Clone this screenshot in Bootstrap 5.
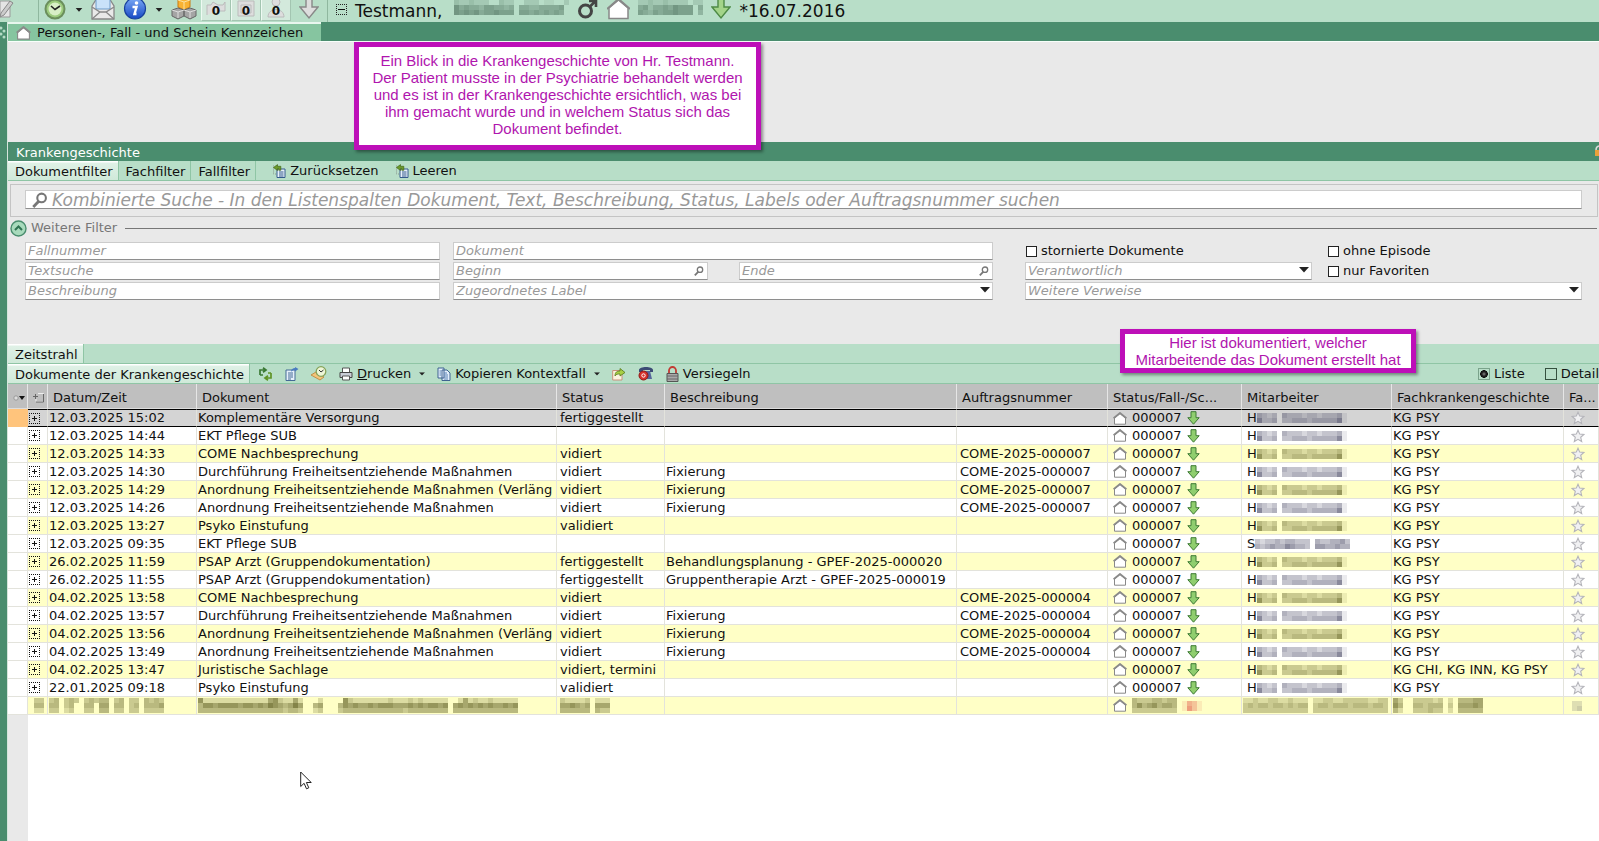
<!DOCTYPE html>
<html lang="de">
<head>
<meta charset="utf-8">
<meta name="viewport" content="width=device-width, initial-scale=1">
<title>Krankengeschichte – Testmann</title>
<link rel="stylesheet" href="https://cdn.jsdelivr.net/npm/bootstrap@5.3.0/dist/css/bootstrap.min.css">
<style>
:root{--dark:#4a8d6e;--mint:#b8dec8;--line:#8fc5a5;--panel:#e9e9e9;--note:#bd0fb8}
body{font:13px/18px "DejaVu Sans",Verdana,sans-serif;color:#111;background:#fff;min-height:100vh;overflow:hidden}
button{font:inherit;color:inherit;background:none;border:0;padding:0;white-space:nowrap}
svg{flex:none;display:block}
.topbar{height:22px;background:var(--mint);font-size:17px;line-height:22px}
.topbar svg,.topbar button{flex:none}
.topbar .vline{width:1px;height:22px;background:#8fb79f}
.countbtn{width:30px;height:21px;position:relative;background:#d3e9dc;border:1px solid #a3c5b1;border-top:0;border-left-color:#eefaf2;font:bold 12px/22px "DejaVu Sans",sans-serif;text-align:center}
.countbtn svg{position:absolute;left:4px;top:0}
.countbtn span{position:relative}
.rail{width:8px;background:var(--dark);border-right:1px solid #d5e5dc}
.darkbar{background:var(--dark)}
.darkbar.titled{height:19px;line-height:21px}
.signtab{background:#86c5a0;border-top:2px solid #e8f6ee;height:19px;line-height:17px;width:313px;gap:6px}
.signpanel{height:101px;background:var(--panel);border-top:1px solid #f8fffb}
.tabstrip{height:20px;background:var(--mint);border-bottom:1px solid var(--line);line-height:19px}
.tabstrip>.tab{height:19px;line-height:21px;padding:0 5px 0 7px;border-right:1px solid var(--line)}
.tabstrip>.tab.on{background:linear-gradient(#fff 0 1px,#dff1e6 2px,#cfe9d9)}
.filters{background:var(--panel);height:163px;padding-top:3px}
.searchbox{margin:0 1px 0 2px;border:1px solid #c4c4c4;height:33px;padding:5px 15px 0 14px}
.field{position:relative;height:18px;background:#fff;border:1px solid #ccc;border-bottom-color:#8e8e8e}
.field input,.field select{width:100%;height:16px;border:0;outline:0;background:none;padding:0 2px;font:italic 13px/16px "DejaVu Sans",sans-serif;color:#999;display:block;appearance:none}
.field input::placeholder{color:#999;opacity:1}
.field>svg{position:absolute;right:2px;top:3px;pointer-events:none}
.bigfield{height:19px;display:flex;align-items:center}
.bigfield input{font-size:17px;line-height:20px;height:20px;padding-left:26px;flex:none}
.bigfield>svg{left:6px;right:auto;top:1px}
.more{color:#777;height:22px;padding:0 2px}
.more hr{margin:0;border-color:#777;opacity:1}
.fgrid{display:grid;grid-template-columns:415fr 13px 255fr 31px 254fr 32px 287fr 15px 255fr;row-gap:2px;margin:3px 17px 0 17px}
.c1{grid-column:1}.c35{grid-column:3/6}.c3{grid-column:3}.c5{grid-column:5}.c7{grid-column:7}.c79{grid-column:7/10}.c9{grid-column:9}
.tick{display:flex;align-items:center;gap:4px;padding-left:1px;color:#111}
.tick input,.viewopt input{appearance:none;margin:0;width:11px;height:11px;border:1px solid #222;background:#fff}
.viewopt{display:flex;align-items:center;gap:4px}
.viewopt input{width:12px;height:12px;background:transparent;border-color:#35503f}
.viewopt input:checked{background:radial-gradient(circle at 50% 50%,#888 0,#222 30%,#111 50%,transparent 58%);border-color:#7aa38b}
.records{table-layout:fixed;width:100%;border-collapse:separate;border-spacing:0}
.records th{height:25px;line-height:18px;background:#bfbfbf;font-weight:400;padding:3px 0 0 5px;border-right:1px solid #e6e6e6;border-bottom:1px solid #ddd;white-space:nowrap;overflow:hidden}
.records td{height:18px;line-height:17px;padding:0 0 0 1px;border-right:1px solid #e3e3dc;border-bottom:1px solid #e3e3dc;white-space:nowrap;overflow:hidden;color:#111}
.records td.in{padding-left:3px}
.records tr.alt td{background:#ffffc6}
.records tr td.gut{background:#fff}
.records tr.sel td{background:#d4d4d4;border-top:1px solid #000;border-bottom:1px solid #000;line-height:16px}
.records tr.sel td.gut{background:#ffc47c;border-color:#ffc47c}
.records td .d-flex{height:16px}
.casecell{gap:5px}
.belowgut{width:20px;background:var(--panel)}
.note{position:absolute;background:#fff;border:5px solid var(--note);box-shadow:2px 2px 3px #0006;color:#b015ae;font:15px/17px "Liberation Sans",Arial,sans-serif;text-align:center}
.note1{left:354px;top:42px;width:407px;height:108px;padding-top:5px}
.note2{left:1120px;top:329px;width:296px;height:44px}
.pointer{position:absolute;left:300px;top:771px}
.cornerlock{position:absolute;right:0;top:145px}
</style>
</head>
<body class="d-flex flex-column">
<svg width="0" height="0" class="position-absolute">
<defs>
<linearGradient id="gb" x1="0" y1="0" x2="0" y2="1"><stop offset="0" stop-color="#7aa9f5"/><stop offset="1" stop-color="#1648c4"/></linearGradient>
<symbol id="house" viewBox="0 0 14 13"><path d="M1.500 6v6.200h11V6L7 1.500z" fill="#fff" stroke="#888"/><path d="M.6 6.300 7 1l6.400 5.300" fill="none" stroke="#8a8a8a" stroke-width="1.800"/></symbol>
<symbol id="down" viewBox="0 0 13 14"><path d="M4 .7h5v6h3.200L6.500 13.200.8 6.700H4z" fill="#8fce6e" stroke="#3e7a35"/></symbol>
<symbol id="star" viewBox="0 0 14 14"><path d="m7 1.200 1.700 3.900 4.200.4-3.200 2.800 1 4.200L7 10.300l-3.700 2.200 1-4.200L1.100 5.500l4.200-.4z" fill="#f1f1f3" stroke="#b4b4ba" stroke-width="1.100"/></symbol>
<symbol id="plus" viewBox="0 0 11 11"><path d="M0 .5h11M0 10.500h11M.5 0v11M10.500 0v11" fill="none" stroke="#111" stroke-dasharray="1 1" shape-rendering="crispEdges"/><path d="M3 5.500h5M5.500 3v5" stroke="#111"/></symbol>
<symbol id="lens" viewBox="0 0 10 10"><circle cx="6" cy="3.700" r="2.700" fill="none" stroke="#777" stroke-width="1.300"/><path d="M4.200 5.800.8 9.300" stroke="#777" stroke-width="1.800"/></symbol>
<symbol id="caret" viewBox="0 0 10 6"><path d="M0 0h10L5 5.500z" fill="#222"/></symbol>
<symbol id="reset" viewBox="0 0 14 14"><path d="M5 5h8v8.500H5z" fill="#e8f1fb" stroke="#345a8c"/><path d="M7 8h4.500M7 10h4.500M7 12h4.500" stroke="#345a8c"/><path d="M1.500 1.500v8.500h3" fill="none" stroke="#8a9a90" stroke-dasharray="1 1"/><path d="M1.500 3.500 5.500.6v1.700h3.300v4H6.800V4.700H5.500v1.800z" fill="#6c9a2c" stroke="#44681a" stroke-width=".7"/></symbol>
</defs>
</svg>

<header class="topbar d-flex align-items-start overflow-hidden">
 <svg width="14" height="20" viewBox="0 0 14 20"><path d="M0 1h10v16H0z" fill="#e4e4e4" stroke="#999"/><path d="m1 13 9-12 3 2-9 12-4 2z" fill="#ccc" stroke="#888"/></svg>
 <span class="vline ms-4"></span>
 <button class="ms-1" aria-label="Verlauf"><svg width="24" height="21" viewBox="0 0 24 21"><circle cx="12" cy="9" r="9.500" fill="#9ccb7d" stroke="#6b8f5c" stroke-width="2"/><circle cx="12" cy="9" r="6.500" fill="#d8efc6"/><path d="m8 6 4 3.500L17 6" fill="none" stroke="#222" stroke-width="1.600"/></svg></button>
 <svg class="ms-2 mt-2" width="8" height="4"><use href="#caret"/></svg>
 <button class="ms-2" aria-label="Nachricht"><svg width="24" height="21" viewBox="0 0 24 21"><path d="M1 6 6-2h12l5 8v13H1z" fill="#e9e9e9" stroke="#888" stroke-width="1.300"/><path d="M5-1h14v10H5z" fill="#c9e2fa" stroke="#6d9bc8"/><path d="m1 7 8 5h6l8-5M1 19l8-7M23 19l-8-7" fill="none" stroke="#888" stroke-width="1.300"/></svg></button>
 <button class="ms-2" aria-label="Info"><svg width="24" height="21" viewBox="0 0 24 21"><circle cx="12" cy="8.500" r="10.500" fill="url(#gb)" stroke="#17409c" stroke-width="1.200"/><circle cx="13.500" cy="3" r="1.800" fill="#fff"/><path d="M9.500 7h4l-2 7h2" fill="none" stroke="#fff" stroke-width="2.400"/></svg></button>
 <svg class="ms-2 mt-2" width="8" height="4"><use href="#caret"/></svg>
 <button class="ms-2" aria-label="Module"><svg width="26" height="21" viewBox="0 0 26 21"><path d="m13-3 6 2v8l-6 3-6-3v-8z" fill="#f9b233" stroke="#c97a10"/><path d="M7 0 13 2l6-2M13 2v7" stroke="#fce1a0" fill="none"/><path d="m7 8 6 2v6l-6 3-6-3v-6zM19 8l6 2v6l-6 3-6-3v-6z" fill="#a5a5a5" stroke="#666"/><path d="m1 10 6 2 6-2 6 2 6-2M7 12v6M19 12v6" fill="none" stroke="#ddd"/></svg></button>
 <div class="d-flex ms-1">
  <button class="countbtn"><svg width="22" height="19" viewBox="0 0 22 19"><path d="M1 15V5h4l2-3 5 3h5l2-3v9h-7" fill="#ddd" stroke="#bbb"/></svg><span>0</span></button>
  <button class="countbtn"><svg width="22" height="19" viewBox="0 0 22 19"><path d="M2 1h16v15H2z" fill="#ddd" stroke="#bbb"/><path d="M5 5h10v8H5z" fill="none" stroke="#bbb"/></svg><span>0</span></button>
  <button class="countbtn"><svg width="22" height="19" viewBox="0 0 22 19"><circle cx="10" cy="2" r="4" fill="#ddd" stroke="#bbb"/><path d="M2 17c0-10 16-10 16 0z" fill="#ddd" stroke="#bbb"/></svg><span>0</span></button>
 </div>
 <svg class="ms-2" width="20" height="20" viewBox="0 0 20 20"><path d="M7-2h6v9h6l-9 11L1 7h6z" fill="#ddd" stroke="#888" stroke-width="1.400"/></svg>
 <span class="vline ms-2"></span>
 <svg class="ms-2 mt-1" width="11" height="11" viewBox="0 0 11 11"><path d="M0 .5h11M0 10.500h11M.5 0v11M10.500 0v11" fill="none" stroke="#222" stroke-dasharray="1 1" shape-rendering="crispEdges"/><path d="M2 5.500h7" stroke="#111"/></svg>
 <span class="ms-2">Testmann,</span>
 <span class="ms-2 ps-1 mosaic" data-p="32232220032200222011002|75655466554505544555560|76767566766606656565650" data-c="84,120,100"></span>
 <svg class="ms-2" width="22" height="20" viewBox="0 0 22 20"><circle cx="8.500" cy="11" r="6" fill="none" stroke="#444" stroke-width="3"/><path d="m12.500 7 6-6M12 1h7v6" fill="none" stroke="#444" stroke-width="2.600"/></svg>
 <svg class="ms-2" width="23" height="20" viewBox="0 0 23 20"><path d="M2 8v10.500h19V8L11.500 0z" fill="#fff" stroke="#888" stroke-width="1.500"/><path d="M0 9 11.500-1 23 9" fill="none" stroke="#888" stroke-width="2"/></svg>
 <span class="ms-2 mosaic" data-p="2232232222022|5635565766605|6546566766604" data-c="84,120,100"></span>
 <svg class="ms-2" width="20" height="20" viewBox="0 0 20 20"><path d="M7-2h6v9h6l-9 11L1 7h6z" fill="#a3d489" stroke="#4d8a45" stroke-width="1.400"/></svg>
 <span class="ms-2">*16.07.2016</span>
</header>

<div class="d-flex flex-grow-1">
 <div class="rail flex-shrink-0"><svg width="6" height="18" viewBox="0 0 6 18"><g fill="#b5dcc6"><circle cx="1" cy="6" r="1.500"/><circle cx="4" cy="9" r="1.500"/><circle cx="1" cy="12" r="1.500"/><circle cx="4" cy="15" r="1.500"/></g></svg></div>
 <main class="flex-grow-1 d-flex flex-column" style="min-width:0">
  <div class="darkbar"><div class="signtab d-flex align-items-center"><svg class="ms-2" width="15" height="14"><use href="#house"/></svg><span>Personen-, Fall - und Schein Kennzeichen</span></div></div>
  <div class="signpanel"></div>
  <div class="darkbar titled text-white ps-2"><span>Krankengeschichte</span></div>
  <nav class="tabstrip d-flex">
   <button class="tab on">Dokumentfilter</button><button class="tab">Fachfilter</button><button class="tab">Fallfilter</button>
   <button class="d-flex align-items-center ms-3"><svg class="me-1" width="14" height="14"><use href="#reset"/></svg>Zurücksetzen</button>
   <button class="d-flex align-items-center ms-3"><svg class="me-1" width="14" height="14"><use href="#reset"/></svg>Leeren</button>
  </nav>
  <section class="filters">
   <div class="searchbox"><div class="field bigfield"><svg width="16" height="16" viewBox="0 0 10 10"><use href="#lens"/></svg><input type="text" aria-label="Kombinierte Suche" placeholder="Kombinierte Suche - In den Listenspalten Dokument, Text, Beschreibung, Status, Labels oder Auftragsnummer suchen"></div></div>
   <div class="more d-flex align-items-center"><button aria-label="Weitere Filter einklappen"><svg width="17" height="17" viewBox="0 0 17 17"><circle cx="8.500" cy="8.500" r="7.500" fill="#a8dabc" stroke="#4a8d6e" stroke-width="1.400"/><path d="m5 10 3.500-3.500L12 10" fill="none" stroke="#2f7352" stroke-width="2"/></svg></button><span class="ms-1">Weitere Filter</span><hr class="flex-grow-1 ms-2"></div>
   <div class="fgrid">
    <div class="field c1"><input aria-label="Fallnummer" placeholder="Fallnummer"></div>
    <div class="field c35"><input aria-label="Dokument" placeholder="Dokument"></div>
    <label class="tick c7"><input type="checkbox">stornierte Dokumente</label>
    <label class="tick c9"><input type="checkbox">ohne Episode</label>
    <div class="field c1"><input aria-label="Textsuche" placeholder="Textsuche"></div>
    <div class="field c3"><input aria-label="Beginn" placeholder="Beginn"><svg width="12" height="10"><use href="#lens"/></svg></div>
    <div class="field c5"><input aria-label="Ende" placeholder="Ende"><svg width="12" height="10"><use href="#lens"/></svg></div>
    <div class="field c7"><select aria-label="Verantwortlich"><option>Verantwortlich</option></select><svg width="10" height="8" viewBox="0 0 10 6"><use href="#caret"/></svg></div>
    <label class="tick c9"><input type="checkbox">nur Favoriten</label>
    <div class="field c1"><input aria-label="Beschreibung" placeholder="Beschreibung"></div>
    <div class="field c35"><select aria-label="Zugeordnetes Label"><option>Zugeordnetes Label</option></select><svg width="10" height="8" viewBox="0 0 10 6"><use href="#caret"/></svg></div>
    <div class="field c79"><select aria-label="Weitere Verweise"><option>Weitere Verweise</option></select><svg width="10" height="8" viewBox="0 0 10 6"><use href="#caret"/></svg></div>
   </div>
  </section>
  <nav class="tabstrip d-flex"><button class="tab on">Zeitstrahl</button></nav>
  <nav class="tabstrip d-flex align-items-center">
   <button class="tab on">Dokumente der Krankengeschichte</button>
   <button class="ms-2" aria-label="Aktualisieren"><svg width="15" height="14" viewBox="0 0 15 14"><path d="M2 8V3h5M5 .8 8 3 5 5.200M2 8h3" fill="none" stroke="#3b7a35" stroke-width="1.700"/><path d="M13 6v5H8M10 13.200 7 11l3-2.200M13 6h-3" fill="none" stroke="#5f9427" stroke-width="1.700"/></svg></button>
   <button class="ms-2 ps-1" aria-label="Öffnen"><svg width="14" height="14" viewBox="0 0 14 14"><path d="M1 3h9v10.500H1z" fill="#e6f0fa" stroke="#456a96"/><path d="M3 6h5M3 8h5M3 10h5M3 12h3" stroke="#456a96"/><path d="M6 5c0-3 2-4 4-4V0l3.500 2L10 4.500V3C8.500 3 7 3.500 6 5z" fill="#4a7cc0"/></svg></button>
   <button class="ms-2 ps-1" aria-label="Verlauf"><svg width="16" height="15" viewBox="0 0 16 15"><path d="m0 9 5-3 8 5-4 3z" fill="#f4c47a" stroke="#b98235" stroke-width=".8"/><circle cx="10" cy="5.500" r="4.800" fill="#eef6d8" stroke="#86a35a" stroke-width="1.300"/><path d="m8 4 2 2 2.500-2" fill="none" stroke="#333"/></svg></button>
   <button class="d-flex align-items-center ms-2 ps-1"><svg class="me-1" width="14" height="14" viewBox="0 0 14 14"><path d="M3.500 1h7v5h-7z" fill="#fff" stroke="#555"/><path d="M1 5.500h12v5H1z" fill="#c9cdd6" stroke="#444"/><path d="M3.500 9h7v4h-7z" fill="#fff" stroke="#555"/></svg><span><u>D</u>rucken</span><svg class="ms-2" width="6" height="4" viewBox="0 0 10 6"><use href="#caret"/></svg></button>
   <button class="d-flex align-items-center ms-2 ps-1"><svg class="me-1" width="14" height="14" viewBox="0 0 14 14"><path d="M1 1h6v10H1zM5 3h5l3 3v7.500H5z" fill="#e3effb" stroke="#3e6391"/><path d="M7 6h3M7 8h4M7 10h4M7 12h4M2.500 4H4M2.500 6H4M2.500 8H4" stroke="#5c83b4"/></svg>Kopieren Kontextfall<svg class="ms-2" width="6" height="4" viewBox="0 0 10 6"><use href="#caret"/></svg></button>
   <button class="ms-2 ps-1" aria-label="Weiterleiten"><svg width="14" height="14" viewBox="0 0 14 14"><path d="M.7 3.500H10V13H.7z" fill="#fbf3df" stroke="#c9907c"/><path d="M3 9c0-4 2-5 5-5V1.500L13 5.500 8 9V7C6 7 4 7 3 9z" fill="#a8cf45" stroke="#55791c" stroke-width=".8"/></svg></button>
   <button class="ms-2 ps-1" aria-label="Anruf"><svg width="16" height="15" viewBox="0 0 16 15"><path d="M1 4c0-4 14-4 14 0v2h-3V4H5v2H1z" fill="#3c4a75"/><path d="M4 5h8l2 8H3z" fill="#55659a"/><circle cx="5.500" cy="9.500" r="4.500" fill="#d5312b" stroke="#8f1a16"/><circle cx="5.500" cy="9.500" r="1.700" fill="none" stroke="#fff"/></svg></button>
   <button class="d-flex align-items-center ms-2 ps-1"><svg class="me-1" width="13" height="16" viewBox="0 0 13 16"><path d="M3 8V4.500a3.500 3.500 0 0 1 7 0V8" fill="none" stroke="#c33a33" stroke-width="1.800"/><path d="M1 7.500h11v8H1z" fill="#a9a9a9" stroke="#555"/><path d="M1 10h11M1 13h11" stroke="#666"/></svg>Versiegeln</button>
   <label class="viewopt ms-auto"><input type="radio" name="view" checked>Liste</label>
   <label class="viewopt ms-3 ps-1"><input type="radio" name="view">Detail</label>
  </nav>
  <table class="records">
   <colgroup><col style="width:20px"><col style="width:20px"><col style="width:149px"><col><col style="width:108px"><col style="width:292px"><col style="width:151px"><col style="width:134px"><col style="width:150px"><col style="width:172px"><col style="width:35px"></colgroup>
   <thead><tr><th><svg width="13" height="8" viewBox="0 0 13 8"><circle cx="3" cy="4" r="2.200" fill="#ddd" stroke="#999"/><path d="M6 2h6L9 6z" fill="#111"/></svg></th><th><svg width="12" height="12" viewBox="0 0 12 12"><path d="M5 1.500h5.500v8H3V7" fill="none" stroke="#eee"/><path d="M10.500 2v8H3M0 4.500h5M2.500 2v5" fill="none" stroke="#666"/></svg></th><th>Datum/Zeit</th><th>Dokument</th><th>Status</th><th>Beschreibung</th><th>Auftragsnummer</th><th>Status/Fall-/Sc...</th><th>Mitarbeiter</th><th>Fachkrankengeschichte</th><th>Fa...</th></tr></thead>
   <tbody id="rows"></tbody>
  </table>
  <div class="flex-grow-1 d-flex"><div class="belowgut"></div></div>
 </main>
</div>

<aside class="note note1">Ein Blick in die Krankengeschichte von Hr. Testmann.<br>Der Patient musste in der Psychiatrie behandelt werden<br>und es ist in der Krankengeschichte ersichtlich, was bei<br>ihm gemacht wurde und in welchem Status sich das<br>Dokument befindet.</aside>
<aside class="note note2">Hier ist dokumentiert, welcher<br>Mitarbeitende das Dokument erstellt hat</aside>
<svg class="pointer" width="12" height="19" viewBox="0 0 12 19"><path d="M.7 1v14.500l3.400-3.200 2.400 5.500 2.300-1-2.400-5.300h4.800z" fill="#fff" stroke="#222"/></svg>
<svg class="cornerlock" width="4" height="12" viewBox="0 0 4 12"><path d="M1 5c0-3 2-4 4-4" fill="none" stroke="#ddd" stroke-width="1.500"/><path d="M0 5h4v6H0z" fill="#e9a13b"/></svg>

<script>
const A='Anordnung Freiheitsentziehende Maßnahmen',D='Durchführung Freiheitsentziehende Maßnahmen',C7='COME-2025-000007',C4='COME-2025-000004';
const data=[
['12.03.2025 15:02','Komplementäre Versorgung','fertiggestellt','',''],
['12.03.2025 14:44','EKT Pflege SUB','','',''],
['12.03.2025 14:33','COME Nachbesprechung','vidiert','',C7],
['12.03.2025 14:30',D,'vidiert','Fixierung',C7],
['12.03.2025 14:29',A+' (Verläng','vidiert','Fixierung',C7],
['12.03.2025 14:26',A,'vidiert','Fixierung',C7],
['12.03.2025 13:27','Psyko Einstufung','validiert','',''],
['12.03.2025 09:35','EKT Pflege SUB','','',''],
['26.02.2025 11:59','PSAP Arzt (Gruppendokumentation)','fertiggestellt','Behandlungsplanung - GPEF-2025-000020',''],
['26.02.2025 11:55','PSAP Arzt (Gruppendokumentation)','fertiggestellt','Gruppentherapie Arzt - GPEF-2025-000019',''],
['04.02.2025 13:58','COME Nachbesprechung','vidiert','',C4],
['04.02.2025 13:57',D,'vidiert','Fixierung',C4],
['04.02.2025 13:56',A+' (Verläng','vidiert','Fixierung',C4],
['04.02.2025 13:49',A,'vidiert','Fixierung',C4],
['04.02.2025 13:47','Juristische Sachlage','vidiert, termini','',''],
['22.01.2025 09:18','Psyko Einstufung','validiert','','']];
// Anonymised text: each digit is the strength of one 5px block, '|' starts the next line of blocks
function mosaic(p,c){
 const L=p.split('|');let s='';
 L.forEach((l,y)=>[...l].forEach((d,x)=>{if(+d)s+=`<rect x="${x*5}" y="${y*5}" width="5" height="5" fill="rgba(${c},${d/10})"/>`}));
 return `<svg width="${L[0].length*5}" height="${L.length*5}" shape-rendering="crispEdges">${s}</svg>`}
const ic=(n,w,h)=>`<svg width="${w}" height="${h}"><use href="#${n}"/></svg>`;
const kg=i=>i==14?'KG CHI, KG INN, KG PSY':'KG PSY';
let h='';
data.forEach((r,i)=>{
 const alt=i&&i%2==0,c=alt?'80,80,20':'60,60,90';
 const m=i==7?'32334344333043344530|43454465443055445440':'43230433323323334100|63340334443444446100';
 h+=`<tr class="${i?alt?'alt':'':'sel'}"><td class="gut"></td><td><div class="d-flex align-items-center">${ic('plus',11,11)}</div></td><td>${r[0]}</td><td>${r[1]}</td><td class="in">${r[2]}</td><td>${r[3]}</td><td class="in">${r[4]}</td><td><div class="casecell d-flex align-items-center ps-1">${ic('house',14,13)}<span>000007</span>${ic('down',13,14)}</div></td><td><div class="d-flex align-items-center ps-1">${i==7?'S':'H'}${mosaic(m,c)}</div></td><td>${kg(i)}</td><td class="in"><div class="d-flex align-items-center ps-1">${ic('star',14,14)}</div></td></tr>`});
const o='80,80,20',w=(p,c=o)=>`<div class="d-flex align-items-center">${mosaic(p,c)}</div>`;
h+=`<tr class="alt"><td class="gut"></td><td>${w('033|044|022')}</td><td>${w('340343034344034033043430|440340044055044034044450|330230033044033033033330')}</td><td>${w('6222222222222256322520002000063222222232223232222200252322322222|4665666656656576545750045000465655656665556565665605656565655656|4444444444444444434430023000344444444444434444444404444444444444')}</td><td class="in">${w('3222230222|5565450555|4444440433')}</td><td></td><td></td><td><div class="casecell d-flex align-items-center ps-1">${ic('house',14,13)}${mosaic('433344344|464564554|333333333',o)}${mosaic('1431|1531','220,60,50')}</div></td><td>${w('22322332232220223322333332233|34344344343440344344434443443|33333333333330333333333333333')}</td><td>${w('530033332302044455|640044344403055565|420033343302044444')}</td><td class="in">${w('0220|0230','90,90,100')}</td></tr>`;
document.getElementById('rows').innerHTML=h;
document.querySelectorAll('.mosaic').forEach(e=>e.innerHTML=mosaic(e.dataset.p,e.dataset.c));
</script>
<script src="https://cdn.jsdelivr.net/npm/bootstrap@5.3.0/dist/js/bootstrap.bundle.min.js"></script>
</body>
</html>
